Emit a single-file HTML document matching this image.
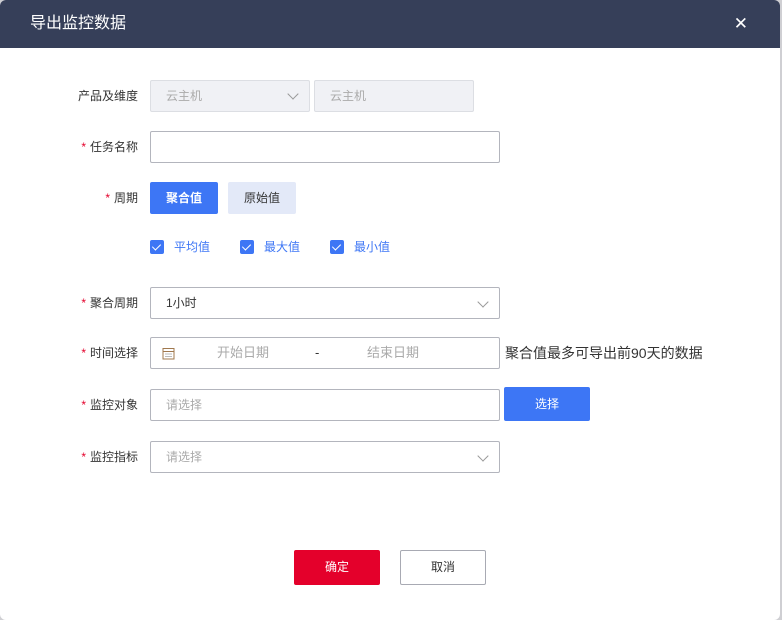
<!DOCTYPE html>
<html><head><meta charset="utf-8"><style>
*{box-sizing:border-box;margin:0;padding:0}
body{width:782px;height:620px;background:#cfcfd3;font-family:"Liberation Sans","Noto Sans CJK SC",sans-serif;font-size:12px;color:#333;position:relative;overflow:hidden}
.dlg{position:absolute;left:0;top:0;width:780px;height:620px;background:#fff;border-radius:6px;overflow:hidden}
.hd{height:48px;background:#363f59;color:#fff;font-size:16px;line-height:48px;padding-left:30px;position:relative}
.x{position:absolute;right:32px;top:0;font-size:17px;font-weight:300}
.abs{position:absolute}
.lbl{position:absolute;right:642px;width:120px;text-align:right;line-height:32px;color:#333}
.lbl b{color:#e4002b;font-weight:normal;margin-right:4px}
.in{position:absolute;left:150px;width:350px;height:32px;border:1px solid #b3b5bd;border-radius:2px;line-height:30px;padding-left:15px;color:#333}
.ph{color:#aaa}
.arr{position:absolute;right:12px;top:10px;width:8px;height:8px;border-right:1px solid #999;border-bottom:1px solid #999;transform:rotate(45deg)}
.btn{position:absolute;height:32px;line-height:32px;text-align:center;border-radius:2px}
.cb{position:absolute;top:240px;width:14px;height:14px;background:#3d76f5;border-radius:2px}
.cb:after{content:"";position:absolute;left:4px;top:2px;width:4px;height:7px;border-right:1.5px solid #fff;border-bottom:1.5px solid #fff;transform:rotate(45deg)}
.ct{position:absolute;top:238px;color:#3d76f5;line-height:18px}
</style></head><body>
<div class="dlg">
<div class="hd">导出监控数据<span class="x">✕</span></div>

<div class="lbl" style="top:80px">产品及维度</div>
<div class="in" style="top:80px;width:160px;background:#f0f1f5;border-color:#dcdee3;color:#aaa">云主机<span class="arr" style="top:9px"></span></div>
<div class="in" style="top:80px;left:314px;width:160px;background:#f0f1f5;border-color:#dcdee3;color:#aaa">云主机</div>

<div class="lbl" style="top:131px"><b>*</b>任务名称</div>
<div class="in" style="top:131px"></div>

<div class="lbl" style="top:182px"><b>*</b>周期</div>
<div class="btn" style="left:150px;top:182px;width:68px;background:#3d76f5;color:#fff;font-weight:bold">聚合值</div>
<div class="btn" style="left:228px;top:182px;width:68px;background:#e3e9f8;color:#333">原始值</div>

<div class="cb" style="left:150px"></div><div class="ct" style="left:174px">平均值</div>
<div class="cb" style="left:240px"></div><div class="ct" style="left:264px">最大值</div>
<div class="cb" style="left:330px"></div><div class="ct" style="left:354px">最小值</div>

<div class="lbl" style="top:287px"><b>*</b>聚合周期</div>
<div class="in" style="top:287px">1小时<span class="arr"></span></div>

<div class="lbl" style="top:337px"><b>*</b>时间选择</div>
<div class="in" style="top:337px;padding-left:0;font-size:13px">
<svg class="abs" style="left:11px;top:9px" width="13" height="13" viewBox="0 0 13 13"><rect x="1" y="1.5" width="11" height="10.5" fill="none" stroke="#a0784e" stroke-width="1"/><line x1="1" y1="4.5" x2="12" y2="4.5" stroke="#a0784e"/><line x1="3" y1="7" x2="10" y2="7" stroke="#aaa" stroke-width=".8"/><line x1="3" y1="9.5" x2="10" y2="9.5" stroke="#aaa" stroke-width=".8"/></svg>
<span class="abs ph" style="left:66px">开始日期</span><span class="abs" style="left:164px">-</span><span class="abs ph" style="left:216px">结束日期</span></div>
<div class="abs" style="left:505px;top:337px;line-height:32px;font-size:14px">聚合值最多可导出前90天的数据</div>

<div class="lbl" style="top:389px"><b>*</b>监控对象</div>
<div class="in ph" style="top:389px">请选择</div>
<div class="btn" style="left:504px;top:387px;width:86px;height:34px;line-height:34px;background:#3d76f5;color:#fff">选择</div>

<div class="lbl" style="top:441px"><b>*</b>监控指标</div>
<div class="in ph" style="top:441px">请选择<span class="arr"></span></div>

<div class="btn" style="left:294px;top:550px;width:86px;height:35px;line-height:35px;background:#e4002b;color:#fff">确定</div>
<div class="btn" style="left:400px;top:550px;width:86px;height:35px;line-height:33px;border:1px solid #a8aab3;color:#333">取消</div>
</div>
</body></html>
